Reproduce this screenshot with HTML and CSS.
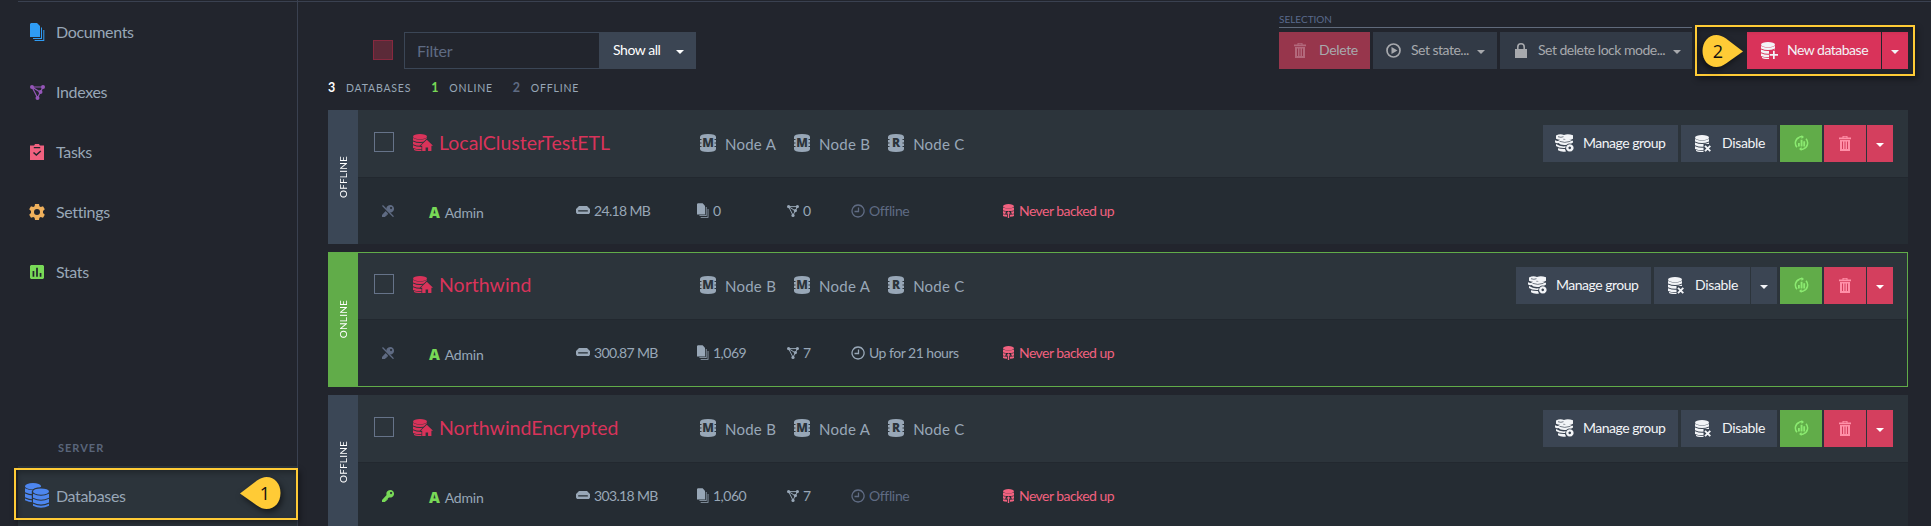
FILE: index.html
```html
<!DOCTYPE html>
<html lang="en">
<head>
<meta charset="utf-8">
<title>Databases</title>
<link rel="stylesheet" href="styles.css">
</head>
<body>
<svg class="sprite" aria-hidden="true">
  <symbol id="docs" viewBox="0 0 15 18"><path d="M1 0h6l3 3v11H0V1z"/><path d="M11 4.5h1V16H3v-1h8zM13.3 7h1v11H4.6v-1h8.7z"/></symbol>
  <symbol id="index" viewBox="0 0 15 15"><path d="M2 2h11L7.500 12.800zM2 2l8 5" fill="none" stroke="currentColor" stroke-width="1.200"/><circle cx="2" cy="2" r="2"/><circle cx="13" cy="2" r="2"/><circle cx="7.500" cy="13" r="2"/><circle cx="10.500" cy="7" r="2"/></symbol>
  <symbol id="task" viewBox="0 0 14 16"><path fill-rule="evenodd" d="M0 1.500h4.200a2.900 2.900 0 0 1 5.600 0H14V16H0zM3.800 3h6.400v1.300H3.800zM3 9l1-1 2.300 2 4-3.600 1 1.100-5 4.500z"/></symbol>
  <symbol id="gear" viewBox="0 0 16 16"><path fill-rule="evenodd" d="M6 0h4l.4 2.300 1.300.8L14 2.300l1.800 3L14 7v2l1.800 1.700-1.800 3-2.300-.8-1.300.8L10 16H6l-.4-2.300-1.300-.8-2.300.8-1.800-3L2 9V7L.2 5.300l1.800-3 2.300.8 1.300-.8zM8 5a3 3 0 1 0 0 6 3 3 0 0 0 0-6z"/></symbol>
  <symbol id="stats" viewBox="0 0 13 13"><path fill-rule="evenodd" d="M1 0h11l1 1v11l-1 1H1l-1-1V1zM2.400 5.500V11H4V5.500zm3.300-3V11h1.600V2.500zM9 7.500V11h1.600V7.500z"/></symbol>
  <symbol id="dbs" viewBox="0 0 24 25"><g id="cyl"><ellipse cx="8" cy="3.200" rx="8" ry="3.200"/><path d="M0 5.300q8 4 16 0v4q-8 4-16 0zM0 10.400q8 4 16 0v3.800q-8 4-16 0zM0 15.400q8 4 16 0v1.900q-8 4-16 0z"/></g><g transform="translate(8 5.400)"><path class="gap" d="M-1.200 3Q0-1.200 8-1.200V20h-9.200z"/><use href="#cyl"/></g></symbol>
  <symbol id="stack" viewBox="0 0 20 17"><ellipse cx="7" cy="2.700" rx="7" ry="2.700"/><path d="M0 4q7 3.400 14 0v2.600q-7 3-14 0zM0 7.600q7 3 14 0v2.600q-7 3-14 0zM0 11.200q6 2.600 11 1v2.400q-5.500 1.300-11-.7zM1 15q4 1 8 .4V17q-5 .4-8-1z"/></symbol>
  <symbol id="home" viewBox="0 0 20 17"><use href="#stack" width="20" height="17"/><path class="gap" d="M13.800 4.500 6.500 12l2 1V17H20V10z"/><path d="m13.800 5.800 6.200 6h-1.600V17h-3.300v-3.500h-2.500V17H9.200v-5.200H7.600z"/></symbol>
  <symbol id="dbadd" viewBox="0 0 17 17"><use href="#stack" width="20" height="17"/><path class="gap" d="M8 8h9v9H8z"/><path d="M12 8.700h1.700V12H17v1.700h-3.300V17H12v-3.300H8.700V12H12z"/></symbol>
  <symbol id="dboff" viewBox="0 0 17 17"><use href="#stack" width="20" height="17"/><path class="gap" d="M8.500 9h8v8h-8z"/><path d="m10 10.800 5.300 5.300m0-5.300L10 16.100" stroke="currentColor" stroke-width="1.900"/></symbol>
  <symbol id="group" viewBox="0 0 19 18"><path d="M1 1.500Q5-.8 9 .9 13-.8 18 1.300v3.500q-4 2.500-9 0-4 2-8 0zM0 6.200q2 1 3 .8Q5 4.800 10 5.500q5-.5 7 1.500l1-.6v2q-3 3-8.500 2.500Q5 11 3.500 9 1 9.500 0 8.300zM1 10q5 3.500 11 2l-1.500 2Q4 14.500 1 12zm2 4.200q3 1 7 .8l1 2.500Q6 18.300 3 16.300z"/><circle class="gap" cx="14.800" cy="13.900" r="4.500"/><path fill-rule="evenodd" d="M14.800 10.200a3.700 3.700 0 1 0 .1 0zm0 2.400a1.300 1.300 0 1 1-.1 0z"/><path d="M3 2.700q3 1.200 5.500 0M4.500 7.300q5 2.200 11 0" stroke="#3b4553" stroke-width=".7" fill="none"/></symbol>
  <symbol id="refresh" viewBox="0 0 15 16"><path d="M5.500 2.200A6.200 6.200 0 0 0 3 12.200M9.500 13.800A6.200 6.200 0 0 0 12 3.800M6.500 14.200h3M8.500 1.800h-3" fill="none" stroke="currentColor" stroke-width="1.500"/><path d="M7.500 0 10 2 7.500 4zM7.500 12v4L5 14zM4 8h1.800v3.500H4zM6.600 4.800h1.900v6.700H6.600zM9.300 6.300h1.800v5.200H9.300z"/></symbol>
  <symbol id="trash" viewBox="0 0 12 15"><path fill-rule="evenodd" d="M0 1.600h3.500V0h5v1.600H12v1.700H0zM4.500.8v.8h3V.8zM1 4h10v11H1zM3 5.500V13h1V5.500zm2.500 0V13h1V5.500zm2.500 0V13h1V5.500z"/></symbol>
  <symbol id="play" viewBox="0 0 15 15"><circle cx="7.500" cy="7.500" r="6.500" fill="none" stroke="currentColor" stroke-width="1.700"/><path d="m5.500 4 6 3.500-6 3.500z"/></symbol>
  <symbol id="lock" viewBox="0 0 12 15"><path fill-rule="evenodd" d="M0 6h2V4a4 4 0 0 1 8 0v2h2v9H0zm3.600 0h4.800V4a2.400 2.400 0 0 0-4.800 0z"/></symbol>
  <symbol id="key" viewBox="0 0 12 12"><path fill-rule="evenodd" d="M8.200 0A3.800 3.800 0 1 1 7 7.400L5.800 8.600v1.200H4.600V11H3.400v1H0v-2l4.600-4.900A3.800 3.800 0 0 1 8.200 0zM9 2a1 1 0 1 0 .1 0z"/></symbol>
  <symbol id="nokey" viewBox="0 0 12 12"><use href="#key" width="12" height="12"/><path d="M0 1.500 10.500 12" class="slash"/><path d="m.5.500 11 11.200" stroke="currentColor" stroke-width="1.300"/></symbol>
  <symbol id="drive" viewBox="0 0 14 8"><path fill-rule="evenodd" d="M3 0h8l3 3v3.500L13 8H1L0 6.500V3zM2.200 4.200v1.400h9.600V4.200z"/></symbol>
  <symbol id="clock" viewBox="0 0 14 14"><path d="M7 1a6 6 0 1 0 .1 0zm.5 2.500v4h-4" fill="none" stroke="currentColor" stroke-width="1.300"/></symbol>
  <symbol id="backup" viewBox="0 0 11 14"><ellipse cx="5.500" cy="2.200" rx="5.500" ry="2.200"/><path d="M0 3.600q5.500 2 11 0v2.800q-5.500 1.400-11 0zM0 7q1.500.5 3 .5L2.200 10Q.7 10 0 9.600zm11 0q-1.500.5-3 .5L8.800 10q1.500 0 2.200-.4zM0 10.200l4 .6v2q-3-.2-4-.9zm11 0-4 .6v2q3-.2 4-.9zM4.800 14V9.600H3.300l2.200-2.300 2.200 2.300H6.200V14z"/></symbol>
  <symbol id="node" viewBox="0 0 16 18"><path d="M0 3Q0 0 8 0t8 3v12q0 3-8 3t-8-3z"/><path class="notch" d="M0 5.500h1.500M0 9h1.500M0 12.500h1.500M14.500 5.500H16M14.500 9H16M14.500 12.500H16"/></symbol>
  <symbol id="pin" viewBox="0 0 41 32"><path d="M0 16.500 17 3.500Q22 0 26.500 0C35 0 40.500 7 40.500 16S35 32 26.500 32Q22 32 17 28.500z"/></symbol>
</svg>

<div class="app">
  <aside class="sidebar">
    <nav class="nav">
      <a class="nav-item"><svg class="c-blue" width="15" height="18"><use href="#docs"/></svg>Documents</a>
      <a class="nav-item"><svg class="c-purple" width="15" height="15"><use href="#index"/></svg>Indexes</a>
      <a class="nav-item"><svg class="c-rose" width="14" height="16"><use href="#task"/></svg>Tasks</a>
      <a class="nav-item"><svg class="c-orange" width="16" height="16"><use href="#gear"/></svg>Settings</a>
      <a class="nav-item"><svg class="c-green" width="14" height="14"><use href="#stats"/></svg>Stats</a>
    </nav>
    <div class="nav-heading">SERVER</div>
    <a class="nav-item active"><svg class="c-royal" width="24" height="25"><use href="#dbs"/></svg>Databases</a>
    <div class="callout callout-one"><div class="pin"><svg width="41" height="32"><use href="#pin"/></svg><span>1</span></div></div>
  </aside>

  <main class="main">
    <div class="toolbar">
      <span class="check check-all"></span>
      <div class="filter"><span class="filter-input">Filter</span><span class="btn filter-btn">Show all<i class="caret"></i></span></div>
      <div class="selection">
        <div class="selection-title">SELECTION</div>
        <div class="btns">
          <span class="btn dim danger w-delete"><svg width="12" height="15"><use href="#trash"/></svg>Delete</span>
          <span class="btn dim w-state"><svg width="15" height="15"><use href="#play"/></svg>Set state...<i class="caret"></i></span>
          <span class="btn dim w-lock"><svg width="12" height="15"><use href="#lock"/></svg>Set delete lock mode...<i class="caret"></i></span>
        </div>
      </div>
      <div class="create">
        <span class="btn primary w-new"><svg width="17" height="17"><use href="#dbadd"/></svg>New database</span><span class="btn primary only-caret"><i class="caret"></i></span>
        <div class="callout callout-two"><div class="pin flip"><svg width="41" height="32"><use href="#pin"/></svg><span>2</span></div></div>
      </div>
    </div>

    <div class="totals"><b class="t-all">3</b><span>DATABASES</span><b class="t-on">1</b><span>ONLINE</span><b class="t-off">2</b><span>OFFLINE</span></div>

    <section class="card">
      <div class="state"><span>OFFLINE</span></div>
      <div class="head">
        <span class="check"></span>
        <svg class="home" width="20" height="17"><use href="#home"/></svg>
        <h2>LocalClusterTestETL</h2>
        <div class="nodes">
          <span class="node"><i class="node-icon"><svg width="16" height="18"><use href="#node"/></svg><b>M</b></i>Node A</span>
          <span class="node"><i class="node-icon"><svg width="16" height="18"><use href="#node"/></svg><b>M</b></i>Node B</span>
          <span class="node"><i class="node-icon"><svg width="16" height="18"><use href="#node"/></svg><b>R</b></i>Node C</span>
        </div>
        <div class="btns">
          <span class="btn w-group"><svg width="19" height="18"><use href="#group"/></svg>Manage group</span>
          <span class="btn w-disable"><svg width="17" height="17"><use href="#dboff"/></svg>Disable</span>
          <span class="btn success"><svg width="15" height="16"><use href="#refresh"/></svg></span>
          <span class="split"><span class="btn remove"><svg width="12" height="15"><use href="#trash"/></svg></span><span class="btn remove only-caret"><i class="caret"></i></span></span>
        </div>
      </div>
      <div class="info">
        <span class="cell off"><svg class="keyicon" width="12" height="12"><use href="#nokey"/></svg></span>
        <span class="cell admin"><b>A</b>Admin</span>
        <span class="cell size"><svg width="14" height="8"><use href="#drive"/></svg>24.18 MB</span>
        <span class="cell"><svg class="up" width="12" height="15"><use href="#docs"/></svg>0</span>
        <span class="cell"><svg width="12" height="12"><use href="#index"/></svg>0</span>
        <span class="cell off"><svg width="14" height="14"><use href="#clock"/></svg>Offline</span>
        <span class="cell warn"><svg width="11" height="14"><use href="#backup"/></svg>Never backed up</span>
      </div>
    </section>

    <section class="card online">
      <div class="state"><span>ONLINE</span></div>
      <div class="head">
        <span class="check"></span>
        <svg class="home" width="20" height="17"><use href="#home"/></svg>
        <h2>Northwind</h2>
        <div class="nodes">
          <span class="node"><i class="node-icon"><svg width="16" height="18"><use href="#node"/></svg><b>M</b></i>Node B</span>
          <span class="node"><i class="node-icon"><svg width="16" height="18"><use href="#node"/></svg><b>M</b></i>Node A</span>
          <span class="node"><i class="node-icon"><svg width="16" height="18"><use href="#node"/></svg><b>R</b></i>Node C</span>
        </div>
        <div class="btns">
          <span class="btn w-group"><svg width="19" height="18"><use href="#group"/></svg>Manage group</span>
          <span class="split tight"><span class="btn w-disable"><svg width="17" height="17"><use href="#dboff"/></svg>Disable</span><span class="btn only-caret"><i class="caret"></i></span></span>
          <span class="btn success"><svg width="15" height="16"><use href="#refresh"/></svg></span>
          <span class="split"><span class="btn remove"><svg width="12" height="15"><use href="#trash"/></svg></span><span class="btn remove only-caret"><i class="caret"></i></span></span>
        </div>
      </div>
      <div class="info">
        <span class="cell off"><svg class="keyicon" width="12" height="12"><use href="#nokey"/></svg></span>
        <span class="cell admin"><b>A</b>Admin</span>
        <span class="cell size"><svg width="14" height="8"><use href="#drive"/></svg>300.87 MB</span>
        <span class="cell"><svg class="up" width="12" height="15"><use href="#docs"/></svg>1,069</span>
        <span class="cell"><svg width="12" height="12"><use href="#index"/></svg>7</span>
        <span class="cell"><svg width="14" height="14"><use href="#clock"/></svg>Up for 21 hours</span>
        <span class="cell warn"><svg width="11" height="14"><use href="#backup"/></svg>Never backed up</span>
      </div>
    </section>

    <section class="card">
      <div class="state"><span>OFFLINE</span></div>
      <div class="head">
        <span class="check"></span>
        <svg class="home" width="20" height="17"><use href="#home"/></svg>
        <h2>NorthwindEncrypted</h2>
        <div class="nodes">
          <span class="node"><i class="node-icon"><svg width="16" height="18"><use href="#node"/></svg><b>M</b></i>Node B</span>
          <span class="node"><i class="node-icon"><svg width="16" height="18"><use href="#node"/></svg><b>M</b></i>Node A</span>
          <span class="node"><i class="node-icon"><svg width="16" height="18"><use href="#node"/></svg><b>R</b></i>Node C</span>
        </div>
        <div class="btns">
          <span class="btn w-group"><svg width="19" height="18"><use href="#group"/></svg>Manage group</span>
          <span class="btn w-disable"><svg width="17" height="17"><use href="#dboff"/></svg>Disable</span>
          <span class="btn success"><svg width="15" height="16"><use href="#refresh"/></svg></span>
          <span class="split"><span class="btn remove"><svg width="12" height="15"><use href="#trash"/></svg></span><span class="btn remove only-caret"><i class="caret"></i></span></span>
        </div>
      </div>
      <div class="info">
        <span class="cell c-green"><svg class="keyicon" width="12" height="12"><use href="#key"/></svg></span>
        <span class="cell admin"><b>A</b>Admin</span>
        <span class="cell size"><svg width="14" height="8"><use href="#drive"/></svg>303.18 MB</span>
        <span class="cell"><svg class="up" width="12" height="15"><use href="#docs"/></svg>1,060</span>
        <span class="cell"><svg width="12" height="12"><use href="#index"/></svg>7</span>
        <span class="cell off"><svg width="14" height="14"><use href="#clock"/></svg>Offline</span>
        <span class="cell warn"><svg width="11" height="14"><use href="#backup"/></svg>Never backed up</span>
      </div>
    </section>
  </main>
</div>
</body>
</html>
```

FILE: styles.css
```css
* { box-sizing: border-box; }
html, body { height: 100%; overflow: hidden; }
body {
  margin: 0;
  background: #22252d;
  color: #98a7b7;
  font: 14px/20px Lato, "Open Sans", sans-serif;
  white-space: nowrap;
}
svg { fill: currentColor; flex: none; display: block; }
.sprite { position: absolute; width: 0; height: 0; }
i { font-style: normal; }

.app { display: flex; height: 526px; }

/* sidebar */
.sidebar {
  position: relative;
  width: 298px;
  padding: 1px 0 0 18px;
  border-right: 1px solid #3a4150;
  display: flex;
  flex-direction: column;
}
.nav { border-top: 1px solid #3a4150; }
.nav-item {
  display: grid;
  grid-template-columns: 38px 1fr;
  align-items: center;
  height: 60px;
  font-size: 16px;
  letter-spacing: -.35px;
  color: #98a7b7;
}
.nav-item svg { justify-self: center; }
.nav-heading {
  margin-top: 136px;
  padding-left: 40px;
  height: 28px;
  font-size: 11px;
  line-height: 20px;
  font-weight: 700;
  letter-spacing: 1px;
  color: #5a657b;
}
.active { background: #2c343b; --gap: #2c343b; padding-bottom: 1px; }
.gap { fill: var(--gap, #2c343b); }
.c-blue { color: #2f9cf4; }
.c-purple { color: #9556b8; }
.c-rose { color: #f1617f; }
.c-orange { color: #efb05c; }
.c-green { color: #78d957; }
.c-royal { color: #4d86ef; }

/* highlight frames with numbered pins */
.callout {
  position: absolute;
  border: 2px solid #ffcb36;
  box-shadow: 2px 3px 6px rgba(0,0,0,.4), inset 2px 3px 5px rgba(0,0,0,.25);
}
.callout-one { left: 14px; top: 468px; width: 284px; height: 52px; }
.callout-two { left: -52px; top: -7px; width: 220px; height: 51px; }
.pin { position: absolute; width: 41px; height: 32px; color: #ffcb36; }
.pin svg { filter: drop-shadow(2px 3px 3px rgba(0,0,0,.55)); }
.pin span {
  position: absolute; left: 17px; top: 5px; width: 16px;
  text-align: center; color: #111; font: 18px/22px "Open Sans", sans-serif;
}
.callout-one .pin { left: 224px; top: 7px; }
.callout-two .pin { left: 5px; top: 8px; }
.flip svg { transform: scaleX(-1); }
.callout-two .pin span { left: 8px; }

/* main */
.main {
  flex: 1;
  margin-top: 1px;
  border-top: 1px solid #3a4150;
  padding: 0 23px 0 30px;
}
.toolbar { display: flex; align-items: flex-start; height: 76px; }
.check { width: 20px; height: 20px; border: 1px solid #667389; flex: none; }
.check-all { margin: 38px 11px 0 45px; border-color: #87293f; background: #5b2a38; }
.filter { display: flex; margin-top: 30px; }
.filter-input {
  width: 195px; height: 37px; border: 1px solid #3b4656; border-right: 0;
  padding-left: 12px; font-size: 16px; letter-spacing: -.2px; line-height: 36px; color: #5f6b83;
}
.btn {
  display: inline-flex; align-items: center; height: 37px; padding-bottom: 1px;
  background: #3b4553; color: #f2f4f7; font-size: 14px; letter-spacing: -.5px; --gap: #3b4553;
}
.caret { border: 4px solid transparent; border-top-color: currentColor; border-bottom: 0; margin-top: 3px; }
.filter-btn { width: 97px; padding-left: 14px; color: #fff; letter-spacing: -.45px; }
.filter-btn .caret { margin-left: 16px; }
.selection { margin: 7px 0 0 auto; width: 413px; }
.selection-title {
  height: 19px; border-bottom: 1px solid #606a7b; margin-bottom: 4px;
  font-size: 10px; line-height: 20px; color: #5a6a8c;
}
.btns { display: flex; gap: 3px; }
.dim { background: #323a46; color: #a7a9ad; }
.dim .caret { margin-left: 8px; }
.danger { background: #97364c; letter-spacing: -.35px; }
.danger svg { color: #b3697c; }
.w-delete { width: 91px; padding-left: 15px; gap: 13px; }
.w-state { width: 124px; padding-left: 13px; }
.w-state svg { margin-right: 10px; }
.w-lock { width: 192px; padding-left: 15px; }
.w-lock svg { margin-right: 11px; }
.create { position: relative; display: flex; gap: 1px; margin: 30px 0 0 55px; }
.primary { background: #d9335a; --gap: #d9335a; }
.w-new { width: 134px; padding-left: 14px; gap: 9px; }
.only-caret { width: 26px; justify-content: center; }

.totals {
  display: flex; align-items: center; height: 20px; margin-bottom: 12px;
  font-size: 10.5px; letter-spacing: .8px;
}
.totals b { width: 18px; font-size: 12.5px; }
.totals span { margin-right: 20px; }
.t-all { color: #fff; }
.t-on { color: #78d957; }
.t-off { color: #5f6b83; }

/* database cards */
.card {
  position: relative;
  display: grid;
  grid-template: 67px 67px / 30px 1fr;
  margin-bottom: 8px;
}
.state {
  grid-row: 1 / 3; background: #3b4756; color: #fff;
  display: flex; align-items: center; justify-content: center;
}
.state span {
  writing-mode: vertical-rl; transform: rotate(180deg);
  font-size: 10px; letter-spacing: .2px;
}
.head { display: flex; align-items: center; background: #2c343b; padding: 0 15px 0 16px; }
.head .check { margin-bottom: 3px; }
.home { margin: 0 6px 3px 19px; color: #d9335a; }
h2 { margin: 0 0 2px; width: 261px; font-size: 19.5px; font-weight: 400; line-height: 24px; color: #d9335a; }
.nodes { display: flex; gap: 18px; font-size: 15px; padding-top: 1px; }
.node { display: flex; align-items: center; gap: 9px; letter-spacing: .25px; }
.node-icon { position: relative; margin-bottom: 3px; }
.node-icon b {
  position: absolute; inset: 0; text-align: center; color: #2c343b;
  font: 800 12px/18px "Open Sans", sans-serif; letter-spacing: 0;
}
.notch { stroke: #2c343b; stroke-width: 1; }
.head .btns { margin-left: auto; }
.w-group { width: 135px; padding-left: 12px; gap: 9px; }
.w-disable { width: 96px; padding-left: 14px; gap: 10px; letter-spacing: -.35px; }
.split { display: flex; gap: 1px; margin-left: -1px; }
.tight { margin-left: 0; }
.success { width: 42px; justify-content: center; background: #61ac49; color: #8bea70; }
.remove { width: 42px; justify-content: center; background: #d43f5e; color: #ff90a8; }
.remove.only-caret { width: 26px; color: #fff; }
.info {
  display: grid;
  grid-template-columns: 71px 147px 121px 90px 64px 152px 1fr;
  align-items: center;
  background: #252c33; border-top: 1px solid #22282f;
}
.cell { display: flex; align-items: center; gap: 4px; letter-spacing: -.5px; }
.keyicon { margin-left: 24px; }
.slash { stroke: #252c33; stroke-width: 1.3; }
.size { letter-spacing: -.65px; }
.size svg { margin-bottom: 2px; }
.up { margin-bottom: 1px; }
.admin { padding-top: 4px; gap: 5px; letter-spacing: -.2px; }
.admin b { font: 800 15px/20px "Open Sans", sans-serif; color: #78d957; margin-top: -2px; }
.off { color: #5f6b83; letter-spacing: -.35px; }
.warn { color: #f1617f; gap: 5px; letter-spacing: -.55px; }
.online { grid-template-rows: 67px 68px; }
.online .info { padding-bottom: 2px; }
.online .state { background: #61ac49; }
.online::after { content: ""; position: absolute; inset: 0; border: 1px solid #61ac49; }
```
